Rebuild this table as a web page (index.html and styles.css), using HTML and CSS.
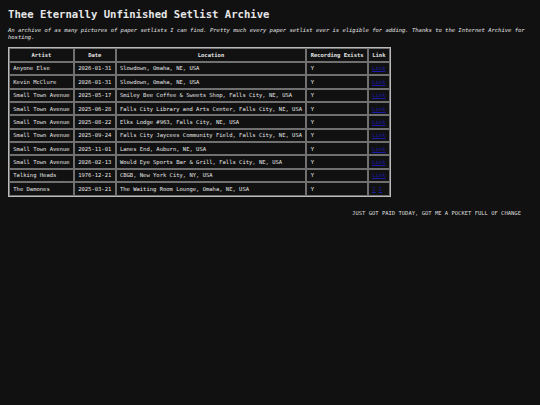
FILE: index.html
```html
<!DOCTYPE html>
<html>
<head>
<meta charset="utf-8">
<title>Thee Eternally Unfinished Setlist Archive</title>
<link rel="stylesheet" href="styles.css">
</head>
<body>
<h1 class="title">Thee Eternally Unfinished Setlist Archive</h1>
<p class="intro">An archive of as many pictures of paper setlists I can find. Pretty much every paper setlist ever is eligible for adding. Thanks to the Internet Archive for hosting.</p>
<table class="setlists">
<thead>
<tr><th>Artist</th><th>Date</th><th>Location</th><th>Recording Exists</th><th>Link</th></tr>
</thead>
<tbody>
<tr><td>Anyone Else</td><td>2026-01-31</td><td>Slowdown, Omaha, NE, USA</td><td>Y</td><td><a href="#">Link</a></td></tr>
<tr><td>Kevin McClure</td><td>2026-01-31</td><td>Slowdown, Omaha, NE, USA</td><td>Y</td><td><a href="#">Link</a></td></tr>
<tr><td>Small Town Avenue</td><td>2025-05-17</td><td>Smiley Bee Coffee &amp; Sweets Shop, Falls City, NE, USA</td><td>Y</td><td><a href="#">Link</a></td></tr>
<tr><td>Small Town Avenue</td><td>2025-06-28</td><td>Falls City Library and Arts Center, Falls City, NE, USA</td><td>Y</td><td><a href="#">Link</a></td></tr>
<tr><td>Small Town Avenue</td><td>2025-08-22</td><td>Elks Lodge #963, Falls City, NE, USA</td><td>Y</td><td><a href="#">Link</a></td></tr>
<tr><td>Small Town Avenue</td><td>2025-09-24</td><td>Falls City Jaycees Community Field, Falls City, NE, USA</td><td>Y</td><td><a href="#">Link</a></td></tr>
<tr><td>Small Town Avenue</td><td>2025-11-01</td><td>Lanes End, Auburn, NE, USA</td><td>Y</td><td><a href="#">Link</a></td></tr>
<tr><td>Small Town Avenue</td><td>2026-02-13</td><td>Would Eye Sports Bar &amp; Grill, Falls City, NE, USA</td><td>Y</td><td><a href="#">Link</a></td></tr>
<tr><td>Talking Heads</td><td>1976-12-21</td><td>CBGB, New York City, NY, USA</td><td>Y</td><td><a href="#">Link</a></td></tr>
<tr><td>The Damones</td><td>2025-03-21</td><td>The Waiting Room Lounge, Omaha, NE, USA</td><td>Y</td><td><a href="#">1</a> <a href="#">2</a></td></tr>
</tbody>
</table>
<footer class="footer">JUST GOT PAID TODAY, GOT ME A POCKET FULL OF CHANGE</footer>
</body>
</html>
```

FILE: styles.css
```css
html, body {
  background: #111111;
}
body {
  margin: 0;
  padding: 8px;
  color: #e6e6e6;
  font-family: "DejaVu Sans Mono", monospace;
}
.title {
  margin: 0 0 7px 0;
  font-size: 10.6px;
  font-weight: bold;
  line-height: 12.4px;
}
.intro {
  margin: 0 0 7px 0;
  font-size: 5.5px;
  font-style: italic;
  line-height: 6.5px;
}
.setlists {
  border: 1px solid #bbbbbb;
  border-spacing: 0;
  font-size: 5.5px;
  line-height: 6px;
}
.setlists th,
.setlists td {
  border: 1px solid #707070;
  padding: 2.7px 3.3px;
  white-space: nowrap;
}
.setlists th {
  font-weight: bold;
  text-align: center;
}
.setlists td {
  text-align: left;
}
.setlists a {
  color: #1a1aa8;
  text-decoration: underline;
}
.footer {
  margin-top: 13px;
  padding-right: 11px;
  text-align: right;
  font-size: 5.5px;
  line-height: 6.4px;
  color: #dddddd;
}
```
